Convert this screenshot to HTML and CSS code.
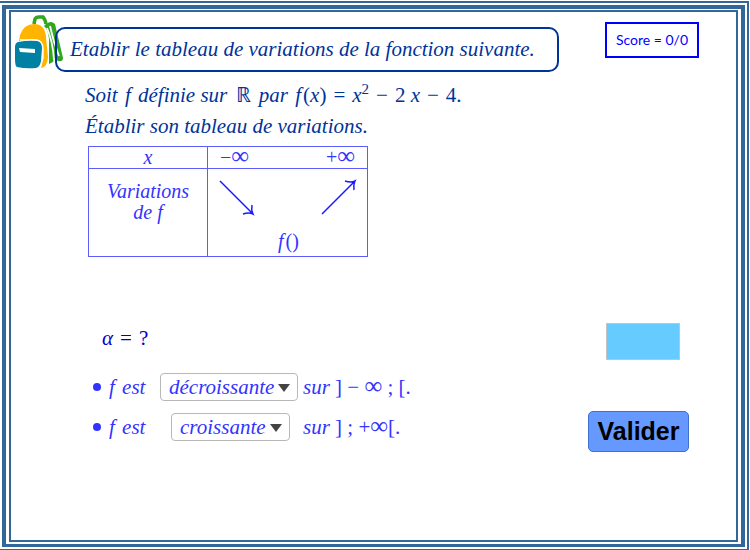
FILE: index.html
```html
<!DOCTYPE html>
<html lang="fr">
<head>
<meta charset="utf-8">
<title>Tableau de variations</title>
<link rel="stylesheet" href="styles.css">
</head>
<body>
<div class="frame-outer">
<div class="frame-middle">
<main class="frame-inner">
  <header class="header">
    <svg class="bag" viewBox="0 0 49 54" aria-hidden="true">
      <path d="M19 9 L20 4 Q21 2 24 2 L28 2 Q30 4 31 9" fill="none" stroke="#33a620" stroke-width="3.6"/>
      <path d="M31 9 Q36 5 40 9 L48 43 Q48 47 43 46 L39 43 L38 47 L34 49 L34 24 Q33 14 29 11 Z" fill="#33a620"/>
      <path d="M35 11 Q38 26 44 41 M32 13 Q38 27 39 45" fill="none" stroke="#fff" stroke-width="1.8"/>
      <path d="M4 26 L5 20 Q9 9 19 9 Q30 9 31 22 L33 42 Q32 53 26 53 L28 43 L28 33 Q27 24 18 24 Z" fill="#ffb400"/>
      <path d="M5 25 H20 Q28 25 28 34 L28 43 L25 53" fill="none" stroke="#fff" stroke-width="1.4"/>
      <path d="M3 27 Q13 25 22 26 Q27 27 27 33 L26 46 Q25 52 21 53 Q11 54 2 52 Q0 51 0 44 L0 32 Q0 28 3 27Z" fill="#0080a3"/>
      <path d="M4 33 L20 34 V38 L5 37Z" fill="#fff"/>
    </svg>
    <h1 class="title">Etablir le tableau de variations de la fonction suivante.</h1>
    <div class="score">Score = 0/0</div>
  </header>

  <section class="statement">
    <p>Soit <span class="func">f</span> définie sur <span class="set">ℝ</span> par <span class="func">f</span><span class="upright">(</span>x<span class="upright">)</span><span class="op">=</span>x<sup>2</sup><span class="op">−</span><span class="upright">2</span> x<span class="op">−</span><span class="upright">4.</span></p>
    <p>Établir son tableau de variations.</p>
  </section>

  <table class="variations">
    <tr>
      <th scope="row">x</th>
      <td><div class="bounds"><span>−<span class="infinity">∞</span></span><span>+<span class="infinity">∞</span></span></div></td>
    </tr>
    <tr>
      <th scope="row" class="label">Variations<br>de f</th>
      <td class="curve">
        <div class="arrows">
          <svg class="arrow" viewBox="0 0 36 36" aria-hidden="true"><path d="M1 1 L34 34 M24 34 Q30 32 34 34 Q32 30 33 25"/></svg>
          <svg class="arrow" viewBox="0 0 36 36" aria-hidden="true"><path d="M1 34 L34 1 M24 1 Q30 3 34 1 Q32 5 33 10"/></svg>
        </div>
        <div class="minimum"><i class="func">f</i>()</div>
      </td>
    </tr>
  </table>

  <form class="answers">
    <div class="fields">
      <label class="alpha" for="alpha"><i>α</i><span class="op">=</span>?</label>
      <div class="sentence">
        <span class="bullet"></span>
        <label class="subject" for="left"><span class="func">f</span> est</label>
        <span class="choice wide">
          <select id="left"><option>décroissante</option><option>croissante</option></select>
          <svg class="caret" viewBox="0 0 12 8" aria-hidden="true"><path d="M0 0H12L6 8Z"/></svg>
        </span>
        <span>sur <span class="upright">] − <span class="infinity">∞</span> ; [.</span></span>
      </div>
      <div class="sentence">
        <span class="bullet"></span>
        <label class="subject" for="right"><span class="func">f</span> est</label>
        <span class="choice">
          <select id="right"><option>croissante</option><option>décroissante</option></select>
          <svg class="caret" viewBox="0 0 12 8" aria-hidden="true"><path d="M0 0H12L6 8Z"/></svg>
        </span>
        <span>sur <span class="upright">] ; +<span class="infinity">∞</span>[.</span></span>
      </div>
    </div>
    <div class="actions">
      <input class="entry" id="alpha" type="text">
      <button class="validate" type="button">Valider</button>
    </div>
  </form>
</main>
</div>
</div>
</body>
</html>
```

FILE: styles.css
```css
* { box-sizing: border-box; }

body {
  display: flex;
  min-height: 100vh;
  margin: 0;
  padding: 1px 1px 0 0;
  background: #fff;
  color: #3333ff;
  font-family: "Liberation Serif", serif;
  font-size: 20px;
}

/* Triple blue frame */
.frame-outer,
.frame-middle,
.frame-inner {
  display: flex;
  flex: 1;
  border: solid #336699;
}
.frame-outer { border-width: 2px 2px 1px 0; padding: 2px; }
.frame-middle { border-width: 4px 4px 3px; padding: 1px 3px 2px; }
.frame-inner { flex-direction: column; border-width: 2px; }

/* Header */
.header {
  display: flex;
  align-items: flex-start;
  padding: 3px 37px 0 4px;
}
.bag { width: 49px; height: 54px; flex: none; }
.title {
  position: relative;
  margin: 12px 0 0 -9px;
  padding: 0 13px;
  width: 504px;
  border: 2px solid #003399;
  border-radius: 10px;
  color: #003399;
  font-size: 21px;
  font-style: italic;
  font-weight: 400;
  line-height: 41px;
  white-space: nowrap;
}
.score {
  margin: 7px 0 0 auto;
  padding: 0 9px;
  border: 2px solid #0000ff;
  color: #0000ff;
  font-family: Lato, sans-serif;
  font-size: 14px;
  line-height: 32px;
}

/* Statement */
.statement {
  margin: 8px 0 0 74px;
  color: #003399;
  font-size: 21px;
  font-style: italic;
  line-height: 31px;
}
.statement p { margin: 0; }
.upright { font-style: normal; }
.op { margin: 0 7px; font-style: normal; }
.func { margin: 0 2px; }
.set { margin: 0 3px; font-style: normal; }
.infinity { font-size: 25px; line-height: 0; }
sup { font-size: 15px; font-style: normal; line-height: 0; }

/* Variation table */
.variations {
  width: 280px;
  margin: 4px 0 0 77px;
  border-collapse: collapse;
  table-layout: fixed;
}
.variations th,
.variations td {
  padding: 0;
  border: 1px solid #5c5cff;
  font-weight: 400;
  line-height: 21px;
}
.variations th { width: 119px; font-style: italic; }
.variations .label { padding-top: 12px; vertical-align: top; }
.bounds { display: flex; justify-content: space-between; padding: 0 12px; }
.curve { vertical-align: top; }
.arrows {
  display: flex;
  justify-content: space-between;
  padding: 11px 10px 0 11px;
}
.arrow {
  width: 36px;
  height: 36px;
  fill: none;
  stroke: #1a1aff;
  stroke-width: 1.5;
  overflow: visible;
}
.minimum { padding-top: 11px; line-height: 29px; text-align: center; }

/* Answers */
.answers {
  display: flex;
  justify-content: space-between;
  margin: 66px 47px 0 82px;
}
.fields { font-size: 21px; font-style: italic; }
.alpha {
  display: block;
  margin-left: 9px;
  color: #0000cc;
  font-style: normal;
  line-height: 30px;
}
.sentence {
  display: flex;
  align-items: center;
  height: 28px;
  margin-top: 12px;
  white-space: nowrap;
}
.alpha + .sentence { margin-top: 20px; }
.bullet {
  width: 8px;
  height: 8px;
  margin-right: 6px;
  border-radius: 50%;
  background: #3333ff;
}
.subject { width: 42px; }
.choice {
  position: relative;
  width: 119px;
  height: 28px;
  margin: 0 13px 0 22px;
}
.choice.wide { width: 138px; margin: 0 5px 0 11px; }
.choice select {
  width: 100%;
  height: 100%;
  padding: 0 20px 0 8px;
  appearance: none;
  border: 1px solid #b8b8b8;
  border-radius: 4px;
  background: #fff;
  color: #3333ff;
  font: inherit;
}
.caret {
  position: absolute;
  top: 11px;
  right: 8px;
  width: 12px;
  height: 8px;
  fill: #444;
  pointer-events: none;
}
.actions {
  display: flex;
  flex-direction: column;
  align-items: flex-end;
}
.entry {
  width: 74px;
  height: 37px;
  margin-right: 9px;
  border: 1px solid #c4c4c4;
  background: #66ccff;
}
.validate {
  width: 101px;
  height: 41px;
  margin-top: 51px;
  padding: 0;
  border: 1px solid #4070c8;
  border-radius: 5px;
  background: #6699ff;
  color: #000;
  font: bold 25px "Liberation Sans", sans-serif;
}
```
